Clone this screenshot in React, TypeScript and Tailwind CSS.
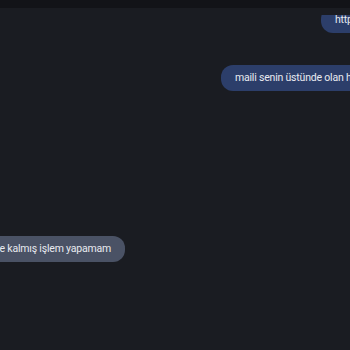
import React from "react";

export default function App() {
  return (
    <div
      className="w-[350px] h-[350px] overflow-hidden bg-[#1a1c22] flex flex-col"
      style={{ fontFamily: "Roboto, 'Noto Sans', sans-serif" }}
    >
      <div className="h-2 shrink-0 bg-[#121318]" />
      <div className="h-[7px] shrink-0" />
      <div className="flex-1 overflow-hidden">
        <div className="-mt-[8px] flex flex-col">
          <div className="flex justify-start pl-[321px]">
            <div className="shrink-0 whitespace-nowrap rounded-xl bg-[#2c3e6a] px-[14px] py-[5px] text-[10.5px] leading-4 tracking-[-0.2px] text-[#e8eaf0]">
              https://destek.ornek.com/hesap
            </div>
          </div>
          <div className="mt-[32px] flex justify-start pl-[221px]">
            <div className="shrink-0 whitespace-nowrap rounded-xl bg-[#2c3e6a] px-[14px] py-[5px] text-[10.5px] leading-4 tracking-[-0.2px] text-[#e8eaf0]">
              maili senin üstünde olan hesaba gönderdim
            </div>
          </div>
          <div className="mt-[145px] flex w-[125px] justify-end">
            <div className="shrink-0 whitespace-nowrap rounded-xl bg-[#4a5265] px-[14px] py-[5px] text-[10.5px] leading-4 tracking-[-0.2px] text-[#e8eaf0]">
              hesap öyle kalmış işlem yapamam
            </div>
          </div>
        </div>
      </div>
    </div>
  );
}
